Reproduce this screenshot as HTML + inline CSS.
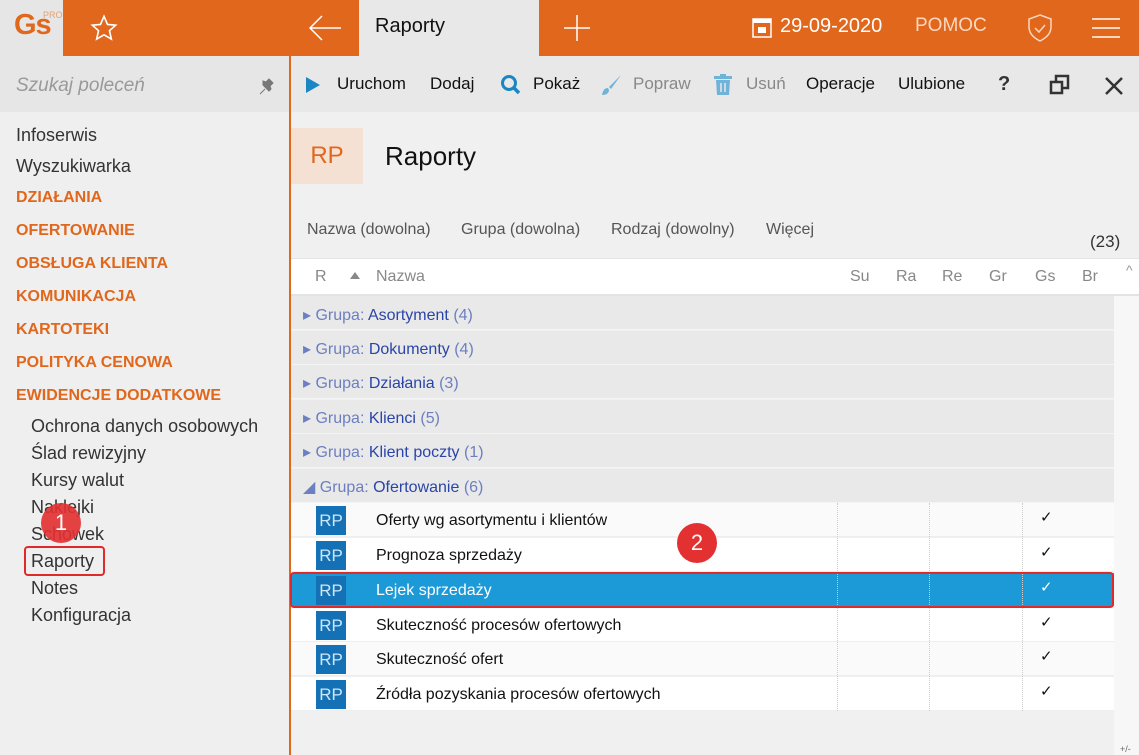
<!DOCTYPE html>
<html><head><meta charset="utf-8"><style>
*{box-sizing:border-box;margin:0;padding:0}
body{width:1139px;height:755px;overflow:hidden;font-family:"Liberation Sans",sans-serif;background:#f0f0f0;position:relative;color:#222}
.a{position:absolute}
.top{top:0;height:56px;background:#e0671b}
.sb{position:absolute;left:16px;font-size:18px;color:#333}
.cat{color:#e0671b;font-weight:bold;font-size:16px}
.sub{left:31px}
.tb{position:absolute;top:74px;font-size:17px;color:#111}
.grp{position:absolute;left:291px;width:823px;height:34px;background:#e9e9e9;border-bottom:1px solid #f4f4f4;font-size:16px;color:#6c7fc0}
.grp span{color:#2a45a8}
.row{position:absolute;left:291px;width:823px;height:34px;background:#fafafa;border-bottom:1px solid #eee;font-size:16px;color:#111}
.rp{position:absolute;left:25px;top:3px;width:30px;height:29px;background:#1571b5;color:#cfe6f7;font-size:17px;text-align:center;line-height:29px}
.ck{position:absolute;left:749px;top:5px;font-size:15px}
.hd{position:absolute;top:268px;font-size:16px;color:#888}
.fl{position:absolute;top:221px;font-size:16px;color:#555}
</style></head><body>
<div class="a" style="left:0;top:0;width:290px;height:755px;background:#efefef"></div>
<div class="a" style="left:0;top:56px;width:290px;height:56px;background:#e6e6e6"></div>
<div class="a top" style="left:0;width:63px;background:#e6e6e6"></div>
<div class="a" style="left:14px;top:9px;font-size:29px;font-weight:bold;color:#e0671b;letter-spacing:-1px">Gs</div>
<div class="a" style="left:43px;top:10px;font-size:9px;color:#e8a070">PRO</div>
<div class="a top" style="left:63px;width:296px"></div>
<svg class="a" style="left:90px;top:14px" width="28" height="28" viewBox="0 0 24 24"><path d="M12 2l3 7 7 .6-5.3 4.7 1.6 7.2L12 17.8 5.7 21.5l1.6-7.2L2 9.6 9 9z" fill="none" stroke="#fff" stroke-width="1.4"/></svg>
<svg class="a" style="left:307px;top:14px" width="36" height="28"><path d="M34 14H3M15 2L3 14l12 12" fill="none" stroke="#fff" stroke-width="1.5"/></svg>
<div class="a top" style="left:359px;width:180px;background:#e8e8e8"></div>
<div class="a" style="left:375px;top:15px;font-size:20px;color:#111">Raporty</div>
<div class="a top" style="left:539px;width:600px"></div>
<svg class="a" style="left:564px;top:15px" width="26" height="26"><path d="M13 0v26M0 13h26" stroke="#fff" stroke-width="1.5"/></svg>
<svg class="a" style="left:752px;top:17px" width="20" height="21"><rect x="1" y="2" width="18" height="18" fill="none" stroke="#fff" stroke-width="1.5"/><rect x="1" y="2" width="18" height="4" fill="#fff"/><rect x="6" y="10" width="8" height="6" fill="#fff"/></svg>
<div class="a" style="left:780px;top:15px;font-size:20px;color:#fff">29-09-2020</div>
<div class="a" style="left:915px;top:15px;font-size:19px;color:#fbd7c0">POMOC</div>
<svg class="a" style="left:1026px;top:13px" width="28" height="30" viewBox="0 0 28 30"><path d="M14 2l11 4v8c0 7-5 11-11 14C8 25 3 21 3 14V6z M9 15l4 4 6-7" fill="none" stroke="#fbd7c0" stroke-width="1.5"/></svg>
<svg class="a" style="left:1092px;top:17px" width="28" height="22"><path d="M0 2h28M0 11h28M0 20h28" stroke="#fbd7c0" stroke-width="2"/></svg>
<div class="a" style="left:291px;top:56px;width:848px;height:56px;background:#e8e8e8"></div>
<div class="a" style="left:289px;top:56px;width:2px;height:699px;background:#e0671b"></div>
<div class="a" style="left:16px;top:75px;font-size:19px;font-style:italic;color:#999">Szukaj poleceń</div>
<svg class="a" style="left:257px;top:78px" width="18" height="18"><path d="M3 16l5-5M6 7l6 6 2-2-1-3 3-3-4-4-3 3-3-1z" fill="#777" stroke="#777"/></svg>
<div class="sb" style="top:125px">Infoserwis</div>
<div class="sb" style="top:156px">Wyszukiwarka</div>
<div class="sb cat" style="top:189px">DZIAŁANIA</div>
<div class="sb cat" style="top:222px">OFERTOWANIE</div>
<div class="sb cat" style="top:255px">OBSŁUGA KLIENTA</div>
<div class="sb cat" style="top:288px">KOMUNIKACJA</div>
<div class="sb cat" style="top:321px">KARTOTEKI</div>
<div class="sb cat" style="top:354px">POLITYKA CENOWA</div>
<div class="sb cat" style="top:387px">EWIDENCJE DODATKOWE</div>
<div class="sb sub" style="top:416px">Ochrona danych osobowych</div>
<div class="sb sub" style="top:443px">Ślad rewizyjny</div>
<div class="sb sub" style="top:470px">Kursy walut</div>
<div class="sb sub" style="top:497px">Naklejki</div>
<div class="sb sub" style="top:524px">Schowek</div>
<div class="sb sub" style="top:551px">Raporty</div>
<div class="sb sub" style="top:578px">Notes</div>
<div class="sb sub" style="top:605px">Konfiguracja</div>
<div class="a" style="left:24px;top:546px;width:81px;height:30px;border:2px solid #e02a2a;border-radius:4px"></div>
<div class="a" style="left:41px;top:503px;width:40px;height:40px;border-radius:50%;background:#e33030;opacity:.9;color:#fff;font-size:22px;text-align:center;line-height:40px">1</div>
<svg class="a" style="left:305px;top:76px" width="16" height="18"><path d="M1 1l14 8-14 8z" fill="#1a86c4"/></svg>
<div class="tb" style="left:337px">Uruchom</div>
<div class="tb" style="left:430px">Dodaj</div>
<svg class="a" style="left:500px;top:74px" width="22" height="22"><circle cx="9" cy="9" r="6.5" fill="none" stroke="#1a86c4" stroke-width="3"/><path d="M13 13l6 6" stroke="#1a86c4" stroke-width="3.5"/></svg>
<div class="tb" style="left:533px">Pokaż</div>
<svg class="a" style="left:600px;top:74px" width="22" height="22"><path d="M21 1L9 13l2 2L21 1zM8 14c-4 0-5 3-6 7 3 0 7-1 7-5z" fill="#6fb3d8"/></svg>
<div class="tb" style="left:633px;color:#888">Popraw</div>
<svg class="a" style="left:714px;top:74px" width="18" height="22"><rect x="0" y="2" width="18" height="3" fill="#6fb3d8"/><rect x="6" y="0" width="6" height="3" fill="#6fb3d8"/><path d="M2 6h14l-1 15H3z" fill="#6fb3d8"/><path d="M7 9v9M11 9v9" stroke="#e8e8e8" stroke-width="1.5"/></svg>
<div class="tb" style="left:746px;color:#888">Usuń</div>
<div class="tb" style="left:806px">Operacje</div>
<div class="tb" style="left:898px">Ulubione</div>
<div class="tb" style="left:998px;font-weight:bold;font-size:20px;top:73px;color:#333">?</div>
<svg class="a" style="left:1049px;top:74px" width="22" height="22"><rect x="7" y="2" width="12" height="12" fill="none" stroke="#333" stroke-width="2.5"/><rect x="2" y="8" width="11" height="11" fill="#e8e8e8" stroke="#333" stroke-width="2.5"/></svg>
<svg class="a" style="left:1104px;top:76px" width="20" height="20"><path d="M2 2l16 16M18 2L2 18" stroke="#333" stroke-width="2.5"/></svg>
<div class="a" style="left:291px;top:128px;width:72px;height:56px;background:#f5e0d4;color:#e0671b;font-size:24px;text-align:center;line-height:56px">RP</div>
<div class="a" style="left:385px;top:141px;font-size:26px;color:#111">Raporty</div>
<div class="fl" style="left:307px">Nazwa (dowolna)</div>
<div class="fl" style="left:461px">Grupa (dowolna)</div>
<div class="fl" style="left:611px">Rodzaj (dowolny)</div>
<div class="fl" style="left:766px">Więcej</div>
<div class="a" style="left:1090px;top:232px;font-size:17px;color:#333">(23)</div>
<div class="a" style="left:291px;top:258px;width:848px;height:38px;background:#fff;border-top:1px solid #e5e5e5;border-bottom:2px solid #e3e3e3"></div>
<div class="hd" style="left:315px">R</div>
<div class="a" style="left:350px;top:272px;width:0;height:0;border:5px solid transparent;border-bottom:7px solid #888;border-top:0"></div>
<div class="hd" style="left:376px">Nazwa</div>
<div class="hd" style="left:850px">Su</div>
<div class="hd" style="left:896px">Ra</div>
<div class="hd" style="left:942px">Re</div>
<div class="hd" style="left:989px">Gr</div>
<div class="hd" style="left:1035px">Gs</div>
<div class="hd" style="left:1082px">Br</div>
<div class="a" style="left:1126px;top:262px;font-size:14px;color:#999">^</div>
<div class="a" style="left:1114px;top:296px;width:25px;height:459px;background:#f7f7f7"></div>
<div class="grp" style="top:296px"><div class="a" style="left:12px;top:9px">▸ Grupa: <span>Asortyment</span> (4)</div></div>
<div class="grp" style="top:331px"><div class="a" style="left:12px;top:8px">▸ Grupa: <span>Dokumenty</span> (4)</div></div>
<div class="grp" style="top:365px"><div class="a" style="left:12px;top:8px">▸ Grupa: <span>Działania</span> (3)</div></div>
<div class="grp" style="top:400px"><div class="a" style="left:12px;top:8px">▸ Grupa: <span>Klienci</span> (5)</div></div>
<div class="grp" style="top:434px"><div class="a" style="left:12px;top:8px">▸ Grupa: <span>Klient poczty</span> (1)</div></div>
<div class="grp" style="top:469px"><div class="a" style="left:12px;top:8px">◢ Grupa: <span>Ofertowanie</span> (6)</div></div>
<div class="row" style="top:503px"><div class="rp">RP</div><div class="a" style="left:85px;top:9px">Oferty wg asortymentu i klientów</div><div class="ck">✓</div></div>
<div class="row" style="top:538px;background:#fff"><div class="rp">RP</div><div class="a" style="left:85px;top:9px">Prognoza sprzedaży</div><div class="ck">✓</div></div>
<div class="row" style="top:573px;background:#1c9ad8;color:#fff"><div class="rp">RP</div><div class="a" style="left:85px;top:9px">Lejek sprzedaży</div><div class="ck" style="color:#fff">✓</div></div>
<div class="row" style="top:608px;background:#fff"><div class="rp">RP</div><div class="a" style="left:85px;top:9px">Skuteczność procesów ofertowych</div><div class="ck">✓</div></div>
<div class="row" style="top:642px"><div class="rp">RP</div><div class="a" style="left:85px;top:9px">Skuteczność ofert</div><div class="ck">✓</div></div>
<div class="row" style="top:677px;background:#fff"><div class="rp">RP</div><div class="a" style="left:85px;top:9px">Źródła pozyskania procesów ofertowych</div><div class="ck">✓</div></div>
<div class="a" style="left:837px;top:503px;width:1px;height:208px;border-left:1px dotted #ccc"></div>
<div class="a" style="left:929px;top:503px;width:1px;height:208px;border-left:1px dotted #ccc"></div>
<div class="a" style="left:1022px;top:503px;width:1px;height:208px;border-left:1px dotted #ccc"></div>
<div class="a" style="left:290px;top:572px;width:824px;height:36px;border:2px solid #e02a2a;border-radius:4px"></div>
<div class="a" style="left:677px;top:523px;width:40px;height:40px;border-radius:50%;background:#e33030;color:#fff;font-size:22px;text-align:center;line-height:40px">2</div>
<div class="a" style="left:1120px;top:744px;font-size:9px;color:#666">+/-</div>
</body></html>
